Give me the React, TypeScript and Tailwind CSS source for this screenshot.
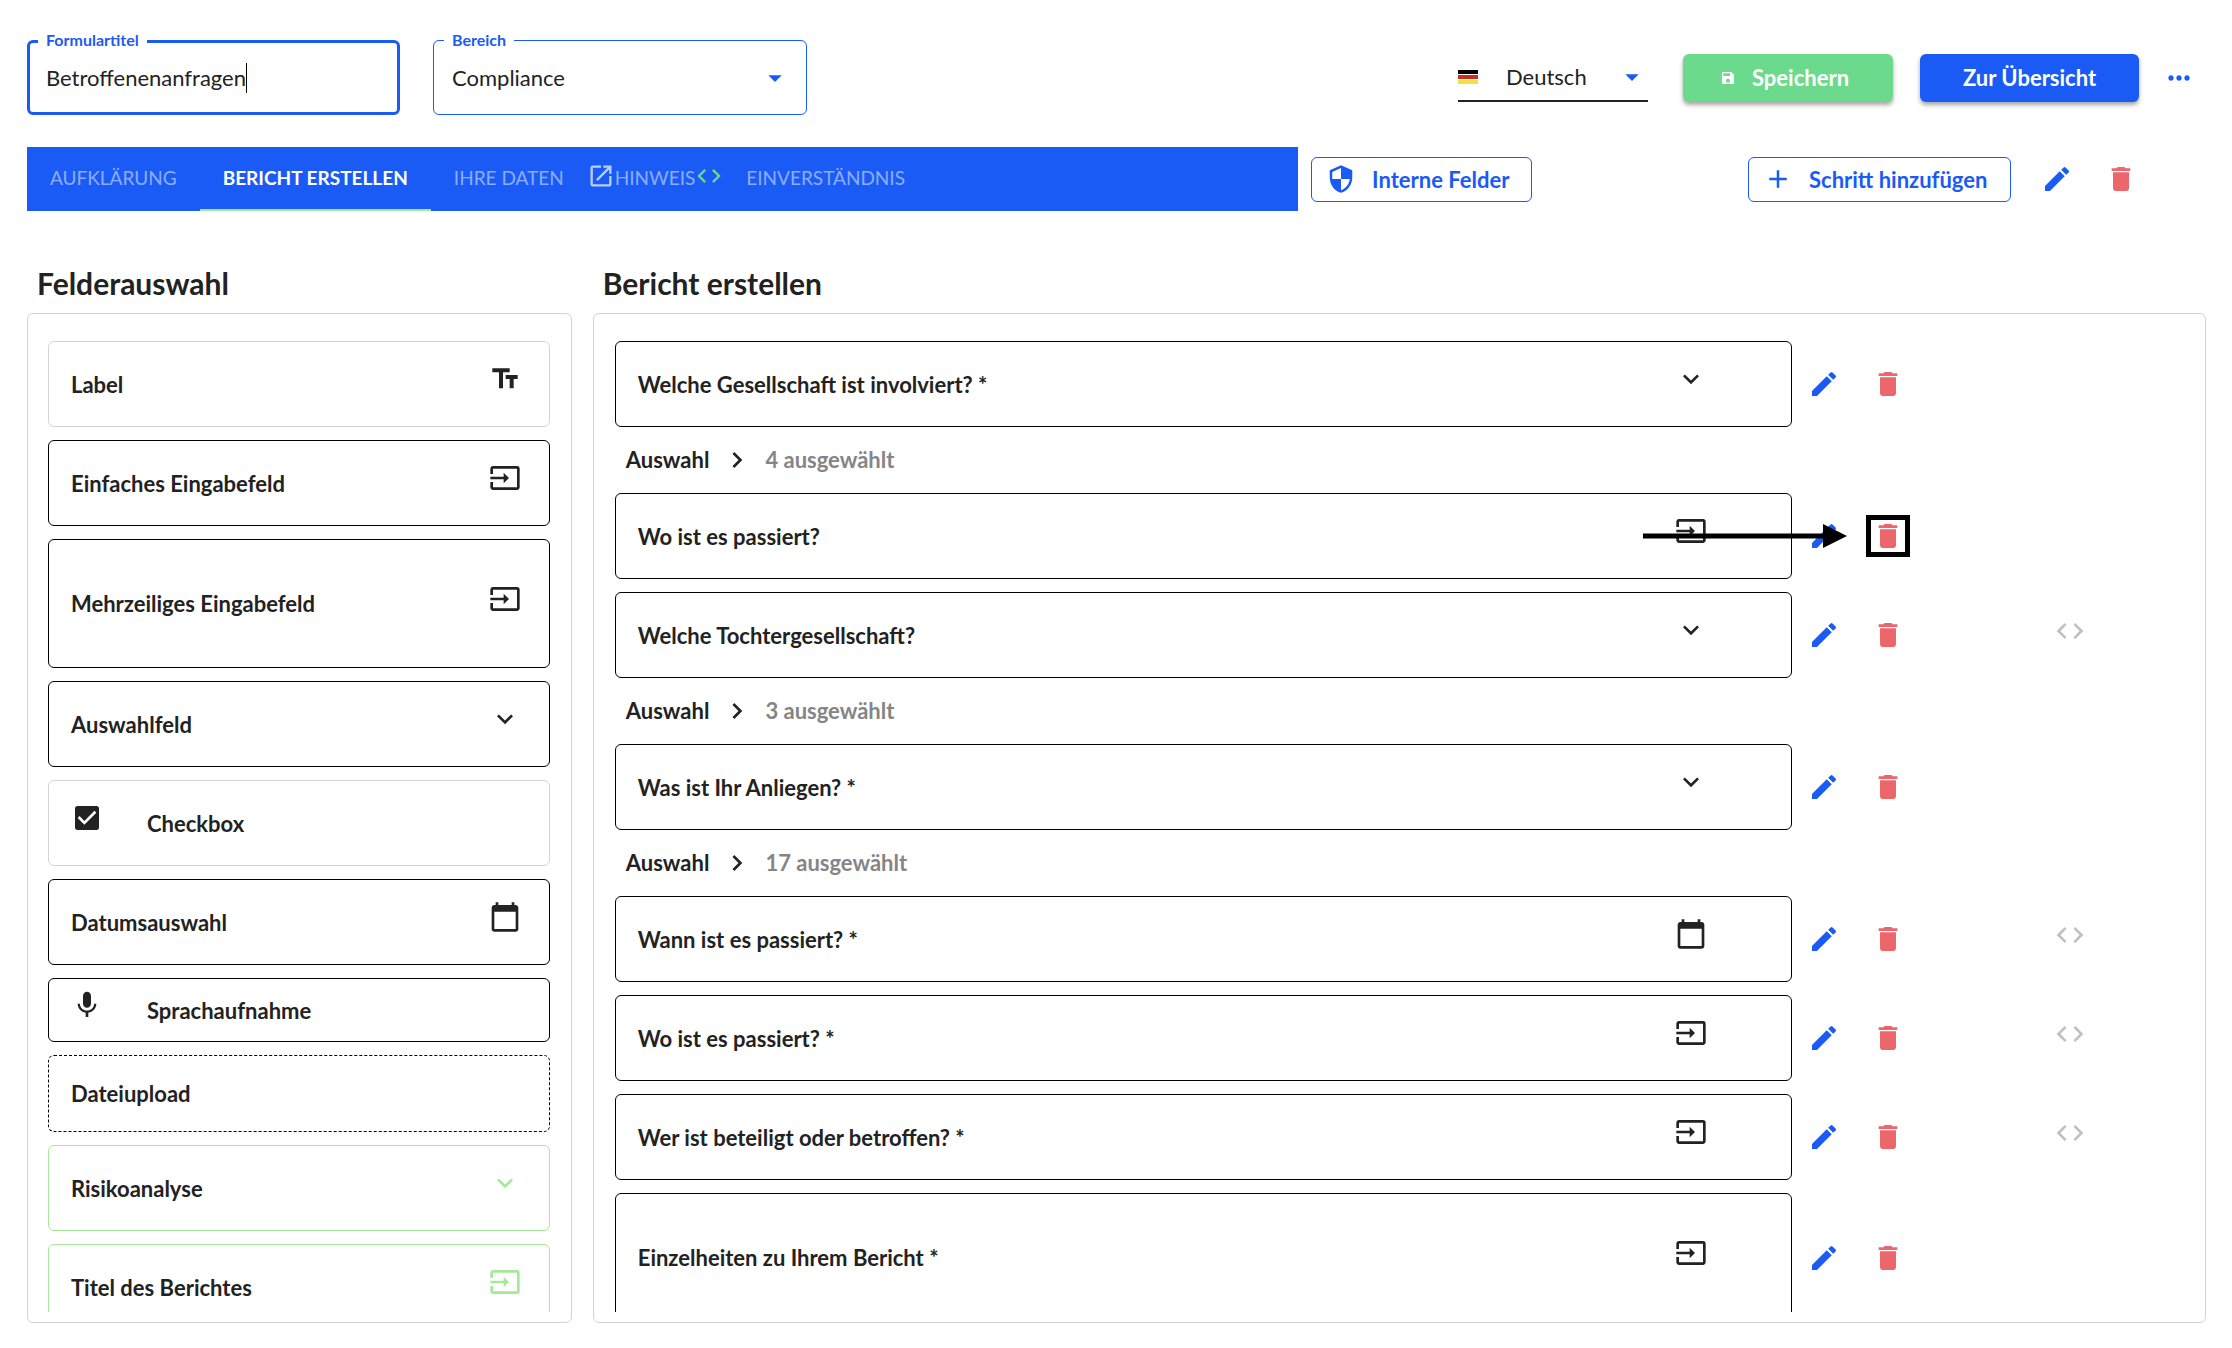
import React, { useState } from 'react'
import clsx from 'clsx'
import { type IconType } from 'react-icons'
import {
  MdAdd,
  MdArrowDropDown,
  MdCalendarToday,
  MdCheckBox,
  MdChevronRight,
  MdCode,
  MdDelete,
  MdEdit,
  MdExpandMore,
  MdInput,
  MdMic,
  MdMoreHoriz,
  MdOpenInNew,
  MdSave,
  MdSecurity,
  MdTextFields,
} from 'react-icons/md'

type TFieldOption = {
  name: string
  icon?: IconType
  iconLeft?: boolean
  box: string
  iconColor?: string
}

type TStepField = {
  id: number
  name: string
  icon: IconType
  tall?: boolean
  selected?: number
  conditional?: boolean
  marked?: boolean
}

const fieldOptions: TFieldOption[] = [
  { name: 'Label', icon: MdTextFields, box: 'h-[86px] border-[#d3d3d3]' },
  { name: 'Einfaches Eingabefeld', icon: MdInput, box: 'h-[86px] border-black' },
  { name: 'Mehrzeiliges Eingabefeld', icon: MdInput, box: 'h-[129px] border-black' },
  { name: 'Auswahlfeld', icon: MdExpandMore, box: 'h-[86px] border-black' },
  { name: 'Checkbox', icon: MdCheckBox, iconLeft: true, box: 'h-[86px] border-[#d3d3d3]' },
  { name: 'Datumsauswahl', icon: MdCalendarToday, box: 'h-[86px] border-black' },
  { name: 'Sprachaufnahme', icon: MdMic, iconLeft: true, box: 'h-16 border-black' },
  { name: 'Dateiupload', box: 'h-[77px] border-dashed border-black' },
  { name: 'Risikoanalyse', icon: MdExpandMore, box: 'h-[86px] border-[#a5e998]', iconColor: 'text-[#a5e998]' },
  { name: 'Titel des Berichtes', icon: MdInput, box: 'h-[86px] border-[#a5e998]', iconColor: 'text-[#a5e998]' },
]

const stepFields: TStepField[] = [
  { id: 1, name: 'Welche Gesellschaft ist involviert? *', icon: MdExpandMore, selected: 4 },
  { id: 2, name: 'Wo ist es passiert?', icon: MdInput, marked: true },
  { id: 3, name: 'Welche Tochtergesellschaft?', icon: MdExpandMore, selected: 3, conditional: true },
  { id: 4, name: 'Was ist Ihr Anliegen? *', icon: MdExpandMore, selected: 17 },
  { id: 5, name: 'Wann ist es passiert? *', icon: MdCalendarToday, conditional: true },
  { id: 6, name: 'Wo ist es passiert? *', icon: MdInput, conditional: true },
  { id: 7, name: 'Wer ist beteiligt oder betroffen? *', icon: MdInput, conditional: true },
  { id: 8, name: 'Einzelheiten zu Ihrem Bericht *', icon: MdInput, tall: true },
]

const tabs = ['AUFKLÄRUNG', 'BERICHT ERSTELLEN', 'IHRE DATEN', 'HINWEIS', 'EINVERSTÄNDNIS']

function GermanFlag() {
  return (
    <svg width="20" height="14" viewBox="0 0 20 14" aria-hidden="true">
      <rect width="20" height="4" fill="#000" />
      <rect y="5" width="20" height="4" fill="#cc2b1d" />
      <rect y="10" width="20" height="4" fill="#ece34b" />
    </svg>
  )
}

function EditDelete({ name }: { name: string }) {
  return (
    <div className="flex gap-8">
      <button aria-label={`${name} bearbeiten`} className="cursor-pointer text-[#1a5bf6]">
        <MdEdit size={32} />
      </button>
      <button aria-label={`${name} löschen`} className="cursor-pointer text-[#ec676b]">
        <MdDelete size={32} />
      </button>
    </div>
  )
}

function Header() {
  const [title, setTitle] = useState('Betroffenenanfragen')

  return (
    <header className="flex items-center">
      <div className="relative flex h-[75px] w-[373px] items-center rounded-md border-[3px] border-[#1a5bf6] pl-4">
        <label
          htmlFor="title"
          className="absolute -top-[13px] left-2 bg-white px-2 text-[16px] leading-5 font-bold text-[#1a5bf6]"
        >
          Formulartitel
        </label>
        <input
          id="title"
          value={title}
          onChange={(e) => setTitle(e.target.value)}
          className="[field-sizing:content] text-[22px] caret-transparent outline-none"
        />
        <span className="h-[30px] w-px bg-black"></span>
      </div>

      <div className="relative ml-[33px] flex h-[75px] w-[374px] items-center rounded-md border border-[#1a5bf6]">
        <label
          htmlFor="area"
          className="absolute -top-[11px] left-[10px] bg-white px-2 text-[16px] leading-5 font-bold text-[#1a5bf6]"
        >
          Bereich
        </label>
        <select id="area" className="h-full w-full appearance-none pl-[18px] text-[22px] outline-none">
          <option>Compliance</option>
        </select>
        <MdArrowDropDown size={32} className="pointer-events-none absolute right-[15px] text-[#1a5bf6]" />
      </div>

      <div className="relative ml-auto flex h-12 w-[190px] items-center border-b-2 border-[#222]">
        <span className="pointer-events-none absolute left-0">
          <GermanFlag />
        </span>
        <select aria-label="Sprache" className="h-full w-full appearance-none pl-12 text-[22px] outline-none">
          <option>Deutsch</option>
        </select>
        <MdArrowDropDown size={32} className="pointer-events-none absolute right-0 text-[#1a5bf6]" />
      </div>

      <button className="ml-[35px] flex h-12 w-[210px] cursor-pointer items-center gap-4 rounded-md bg-[#6bda8d] pl-[37px] text-[22px] font-bold text-white shadow-[0_3px_4px_rgba(0,0,0,0.35)]">
        <MdSave size={16} />
        Speichern
      </button>
      <button className="ml-[27px] h-12 w-[219px] cursor-pointer rounded-md bg-[#1a5bf6] text-[22px] font-bold text-white shadow-[0_3px_4px_rgba(0,0,0,0.35)]">
        Zur Übersicht
      </button>
      <button aria-label="Mehr" className="mr-[11px] ml-6 cursor-pointer text-[#1a5bf6]">
        <MdMoreHoriz size={32} />
      </button>
    </header>
  )
}

function StepBar() {
  const [active, setActive] = useState('BERICHT ERSTELLEN')

  return (
    <div className="mt-8 flex items-center">
      <div role="tablist" className="flex h-16 w-7/12 bg-[#1a5bf6] text-[19px]">
        {tabs.map((tab) => (
          <button
            key={tab}
            role="tab"
            aria-selected={tab === active}
            onClick={() => setActive(tab)}
            className={clsx(
              'flex cursor-pointer items-center border-b-2',
              tab !== 'HINWEIS' && 'px-[23px]',
              tab === active ? 'border-[#a5e998] font-bold text-white' : 'border-transparent text-white/50'
            )}
          >
            {tab === 'HINWEIS' && <MdOpenInNew size={28} className="mb-1 text-white/70" />}
            {tab}
            {tab === 'HINWEIS' && <MdCode size={28} className="mb-1 text-[#6bda8d]" />}
          </button>
        ))}
      </div>
      <button className="ml-[13px] flex h-[45px] w-[221px] cursor-pointer items-center gap-4 rounded-md border border-[#1a5bf6] pl-[14px] text-[22px] font-bold text-[#1a5bf6]">
        <MdSecurity size={30} />
        Interne Felder
      </button>
      <button className="mr-[30px] ml-auto flex h-[45px] w-[263px] cursor-pointer items-center gap-4 rounded-md border border-[#1a5bf6] pl-[14px] text-[22px] font-bold text-[#1a5bf6]">
        <MdAdd size={30} />
        Schritt hinzufügen
      </button>
      <div className="mr-[69px]">
        <EditDelete name="Schritt" />
      </div>
    </div>
  )
}

function FieldOption({ name, icon: Icon, iconLeft, box, iconColor }: TFieldOption) {
  return (
    <li className={clsx('flex shrink-0 cursor-grab items-center rounded-md border pr-7 pl-[22px]', box)}>
      {Icon && iconLeft && <Icon size={32} className="mr-11 mb-[10px]" />}
      {name}
      {Icon && !iconLeft && <Icon size={32} className={clsx('mb-[10px] ml-auto', iconColor)} />}
    </li>
  )
}

function StepField({ name, icon: Icon, tall, selected, conditional, marked }: TStepField) {
  return (
    <li className="shrink-0">
      <div className="relative flex items-center">
        <div
          className={clsx(
            'flex flex-1 items-center justify-between rounded-md border border-black pr-[84px] pl-[22px]',
            tall ? 'h-[129px]' : 'h-[86px]'
          )}
        >
          {name}
          <Icon size={32} className="mb-[10px]" />
        </div>
        <div className="flex w-[392px] items-center pl-4">
          <EditDelete name={name} />
          {conditional && <MdCode size={32} className="mb-2 ml-[150px] text-[#c0c0c0]" />}
        </div>
        {marked && (
          <>
            <svg
              width="204"
              height="26"
              viewBox="0 0 204 26"
              className="pointer-events-none absolute right-[337px]"
              aria-hidden="true"
            >
              <path d="M0 10.500h180V1l24 12-24 12v-9.500H0z" fill="#000" />
            </svg>
            <span className="pointer-events-none absolute right-[274px] h-[42px] w-11 border-[5px] border-black"></span>
          </>
        )}
      </div>
      {selected && (
        <button className="flex h-[53px] cursor-pointer items-end pb-1 pl-[11px]">
          <span>Auswahl</span>
          <MdChevronRight size={32} className="mx-3" />
          <span className="text-[#858585]">{selected} ausgewählt</span>
        </button>
      )}
    </li>
  )
}

export default function App() {
  return (
    <div className="flex h-screen flex-col bg-white pt-10 pr-[26px] pb-[25px] pl-[27px] font-['Lato','Open_Sans',sans-serif] text-[#222]">
      <Header />
      <StepBar />

      <main className="mt-[54px] flex min-h-0 flex-1 gap-[21px]">
        <section className="flex w-1/4 flex-col">
          <h2 className="mb-3 pl-[10px] text-[30px] leading-9 font-bold">Felderauswahl</h2>
          <div className="min-h-0 flex-1 rounded-md border border-[#d3d3d3] pt-[27px] pr-[21px] pb-[10px] pl-5">
            <ul className="flex h-full flex-col gap-[13px] overflow-hidden text-[22px] font-bold">
              {fieldOptions.map((option) => (
                <FieldOption key={option.name} {...option} />
              ))}
            </ul>
          </div>
        </section>

        <section className="flex flex-1 flex-col">
          <h2 className="mb-3 pl-[10px] text-[30px] leading-9 font-bold">Bericht erstellen</h2>
          <div className="min-h-0 flex-1 rounded-md border border-[#d3d3d3] px-[21px] pt-[27px] pb-[10px]">
            <ul className="flex h-full flex-col gap-[13px] overflow-hidden text-[22px] font-bold">
              {stepFields.map((field) => (
                <StepField key={field.id} {...field} />
              ))}
            </ul>
          </div>
        </section>
      </main>
    </div>
  )
}
